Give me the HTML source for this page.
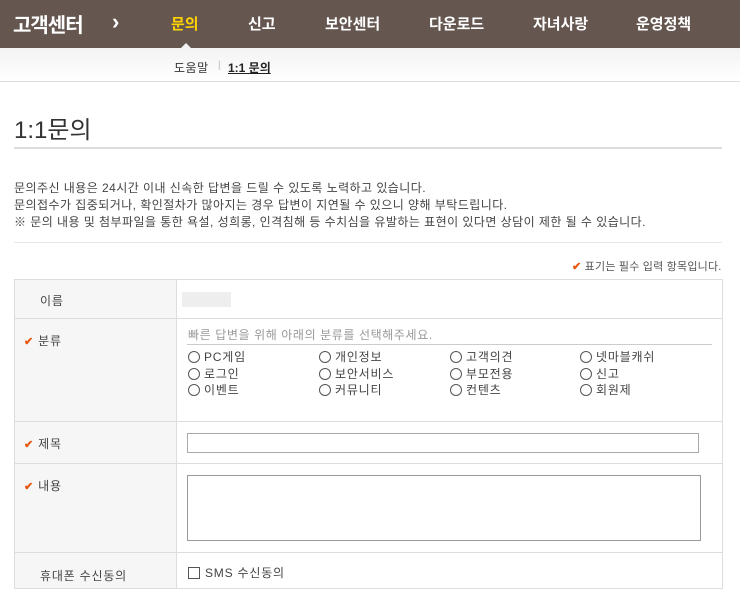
<!DOCTYPE html>
<html><head><meta charset="utf-8"><style>
*{margin:0;padding:0;box-sizing:border-box}
body{width:740px;height:584px;overflow:hidden;background:#fff;font-family:"Liberation Sans","Noto Sans CJK KR",sans-serif;color:#333;position:relative}
.a{position:absolute;white-space:nowrap}
.hd{position:absolute;left:0;top:0;width:740px;height:48px;background:#655750}
.nav{color:#fff;font-weight:bold;font-size:15px;top:13px}
.sub{position:absolute;left:0;top:48px;width:740px;height:34px;background:linear-gradient(#f3f3f3,#fff);border-bottom:1px solid #ddd}
.t{font-size:12px;color:#444;letter-spacing:0.45px}
.chk{color:#e8560f;font-size:11px;font-weight:bold}
.r{font-size:12px;color:#444;letter-spacing:0.8px}
.r i{display:inline-block;width:12px;height:12px;border:1px solid #555;border-radius:50%;vertical-align:-2px;margin-right:4px}
.line{position:absolute;background:#ddd}
</style></head><body>
<div class="hd"></div>
<div class="a" style="left:13px;top:9px;color:#fff;font-size:20px;font-weight:bold;letter-spacing:-1px">고객센터</div>
<div class="a" style="left:112px;top:9px;color:#fff;font-size:22px;font-weight:bold">›</div>
<div class="a nav" style="left:171px;color:#ffd200">문의</div>
<div class="a nav" style="left:248px">신고</div>
<div class="a nav" style="left:325px">보안센터</div>
<div class="a nav" style="left:429px">다운로드</div>
<div class="a nav" style="left:533px">자녀사랑</div>
<div class="a nav" style="left:636px">운영정책</div>
<div class="a" style="left:181px;top:43px;width:0;height:0;border:5px solid transparent;border-bottom-color:#f3f3f3;border-top:0"></div>
<div class="sub"></div>
<div class="a" style="left:174px;top:59px;font-size:12px;color:#333;letter-spacing:0.5px">도움말</div>
<div class="a" style="left:218px;top:60px;font-size:10px;color:#bbb">|</div>
<div class="a" style="left:228px;top:59px;font-size:12px;color:#222;text-decoration:underline;font-weight:bold">1:1 문의</div>
<div class="a" style="left:14px;top:110px;font-size:24px;color:#333">1:1문의</div>
<div class="line" style="left:14px;top:147px;width:708px;height:2px;background:#ddd"></div>
<div class="a t" style="left:14px;top:180px;line-height:17px">문의주신 내용은 24시간 이내 신속한 답변을 드릴 수 있도록 노력하고 있습니다.<br>문의접수가 집중되거나, 확인절차가 많아지는 경우 답변이 지연될 수 있으니 양해 부탁드립니다.<br>※ 문의 내용 및 첨부파일을 통한 욕설, 성희롱, 인격침해 등 수치심을 유발하는 표현이 있다면 상담이 제한 될 수 있습니다.</div>
<div class="line" style="left:14px;top:242px;width:708px;height:1px;background:#e8e8e8"></div>
<div class="a" style="left:572px;top:258px;font-size:11px;color:#555;letter-spacing:0.2px"><span class="chk">✔</span> 표기는 필수 입력 항목입니다.</div>
<div class="a" style="left:14px;top:279px;width:163px;height:310px;background:#f6f6f6"></div>
<div class="a" style="left:14px;top:279px;width:709px;height:310px;border:1px solid #ddd"></div>
<div class="line" style="left:176px;top:279px;width:1px;height:310px"></div>
<div class="line" style="left:14px;top:318px;width:709px;height:1px"></div>
<div class="line" style="left:14px;top:421px;width:709px;height:1px"></div>
<div class="line" style="left:14px;top:463px;width:709px;height:1px"></div>
<div class="line" style="left:14px;top:552px;width:709px;height:1px"></div>
<div class="a r" style="left:40px;top:292px">이름</div>
<div class="a" style="left:182px;top:292px;width:49px;height:15px;background:#eee"></div>
<div class="a r" style="left:24px;top:332px"><span class="chk">✔</span> 분류</div>
<div class="a" style="left:188px;top:326px;font-size:12px;color:#999;letter-spacing:0.6px">빠른 답변을 위해 아래의 분류를 선택해주세요.</div>
<div class="line" style="left:187px;top:344px;width:525px;height:1px;background:#ccc"></div>
<div class="a r" style="left:188px;top:349px;line-height:16.5px"><i></i>PC게임<br><i></i>로그인<br><i></i>이벤트</div>
<div class="a r" style="left:319px;top:349px;line-height:16.5px"><i></i>개인정보<br><i></i>보안서비스<br><i></i>커뮤니티</div>
<div class="a r" style="left:450px;top:349px;line-height:16.5px"><i></i>고객의견<br><i></i>부모전용<br><i></i>컨텐츠</div>
<div class="a r" style="left:580px;top:349px;line-height:16.5px"><i></i>넷마블캐쉬<br><i></i>신고<br><i></i>회원제</div>
<div class="a r" style="left:24px;top:435px"><span class="chk">✔</span> 제목</div>
<div class="a" style="left:187px;top:433px;width:512px;height:20px;border:1px solid #aaa"></div>
<div class="a r" style="left:24px;top:477px"><span class="chk">✔</span> 내용</div>
<div class="a" style="left:187px;top:475px;width:514px;height:66px;border:1px solid #999"></div>
<div class="a r" style="left:40px;top:567px">휴대폰 수신동의</div>
<div class="a r" style="left:188px;top:564px"><span style="display:inline-block;width:12px;height:12px;border:1px solid #555;vertical-align:-2px;margin-right:5px"></span>SMS 수신동의</div>
</body></html>
